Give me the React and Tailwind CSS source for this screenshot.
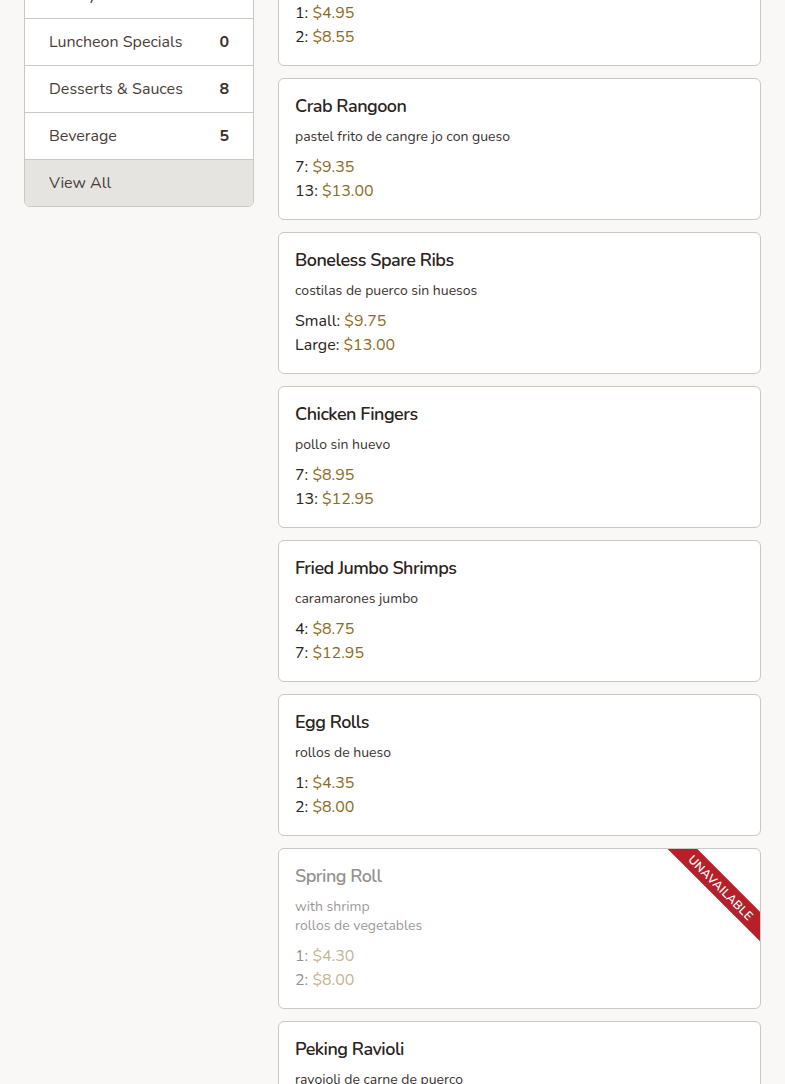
const categories = [
  { name: 'Chef Specials', count: 14 },
  { name: 'Family Dinners', count: 6 },
  { name: 'Luncheon Specials', count: 0 },
  { name: 'Desserts & Sauces', count: 8 },
  { name: 'Beverage', count: 5 },
];

const items = [
  { name: 'Wonton Soup', desc: 'sopa de wonton', prices: [['1', '$4.95'], ['2', '$8.55']] },
  { name: 'Crab Rangoon', desc: 'pastel frito de cangre jo con gueso', prices: [['7', '$9.35'], ['13', '$13.00']] },
  { name: 'Boneless Spare Ribs', desc: 'costilas de puerco sin huesos', prices: [['Small', '$9.75'], ['Large', '$13.00']] },
  { name: 'Chicken Fingers', desc: 'pollo sin huevo', prices: [['7', '$8.95'], ['13', '$12.95']] },
  { name: 'Fried Jumbo Shrimps', desc: 'caramarones jumbo', prices: [['4', '$8.75'], ['7', '$12.95']] },
  { name: 'Egg Rolls', desc: 'rollos de hueso', prices: [['1', '$4.35'], ['2', '$8.00']] },
  { name: 'Spring Roll', desc: ['with shrimp', 'rollos de vegetables'], prices: [['1', '$4.30'], ['2', '$8.00']], unavailable: true },
  { name: 'Peking Ravioli', desc: 'ravoioli de carne de puerco', prices: [['6', '$8.95'], ['12', '$14.95']] },
];

function MenuCard({ item }) {
  const lines = Array.isArray(item.desc) ? item.desc : [item.desc];
  return (
    <div className="relative overflow-hidden rounded-md border border-[#cbc7c3] bg-white px-4 py-4">
      {item.unavailable && (
        <div className="absolute top-[28px] right-[-41px] flex h-[21px] w-[160px] rotate-45 items-center justify-center bg-[#b5202a] text-[12px] font-semibold uppercase tracking-[0.3px] text-white">
          Unavailable
        </div>
      )}
      <div className={item.unavailable ? 'opacity-50' : ''}>
        <h3 className="text-[18px] font-semibold leading-[22px] tracking-[-0.5px] text-[#2a2320]">{item.name}</h3>
        <div className="mt-[10px] text-[14px] leading-[19px] text-[#3a3230]">
          {lines.map(l => <p key={l}>{l}</p>)}
        </div>
        <div className="mt-[9px] text-[16px] leading-[24px] text-[#2a2320]">
          {item.prices.map(([label, price]) => (
            <p key={label}>{label}: <span className="text-[#8a6b24]">{price}</span></p>
          ))}
        </div>
      </div>
    </div>
  );
}

export default function App() {
  return (
    <div className="min-h-screen overflow-hidden bg-[#f9f8f6] font-['Nunito','Lato','Open_Sans',sans-serif]">
      <div className="mt-[-76px] flex items-start gap-6 px-6">
        <aside className="w-[230px] shrink-0 overflow-hidden rounded-md border border-[#cbc7c3] bg-white">
          {categories.map(c => (
            <div key={c.name} className="flex h-[47px] items-center justify-between border-b border-[#cbc7c3] px-6 text-[16px] text-[#4a3e3a]">
              <span>{c.name}</span>
              <span className="font-bold text-[#3a2f2b]">{c.count}</span>
            </div>
          ))}
          <div className="flex h-[46px] items-center bg-[#e6e4e1] px-6 text-[16px] text-[#4a3e3a]">View All</div>
        </aside>
        <main className="flex flex-1 flex-col gap-3 pb-6">
          {items.map(item => <MenuCard key={item.name} item={item} />)}
        </main>
      </div>
    </div>
  );
}
